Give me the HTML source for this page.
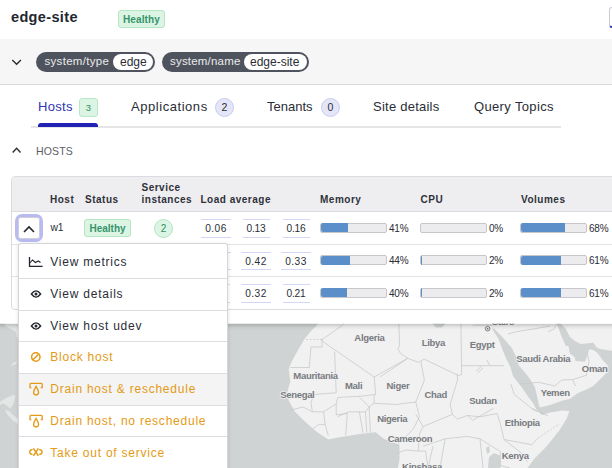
<!DOCTYPE html>
<html><head><meta charset="utf-8">
<style>
*{box-sizing:border-box;margin:0;padding:0}
html,body{width:612px;height:468px;overflow:hidden;background:#fff}
body{font-family:"Liberation Sans",sans-serif;color:#2a2d35;position:relative}
.abs{position:absolute;white-space:nowrap}
.t{position:absolute;white-space:nowrap;line-height:1}
</style></head><body>

<!-- header -->
<div class="t" style="left:11px;top:9.5px;font-size:14.5px;font-weight:700;letter-spacing:0.35px;color:#23262f">edge-site</div>
<div class="abs" style="left:118px;top:10px;width:47px;height:18px;background:#dcf4e4;border:1px solid #b4e6c4;border-radius:3px"></div>
<div class="t" style="left:123px;top:15px;font-size:10px;font-weight:700;letter-spacing:0.1px;color:#36946a">Healthy</div>
<div class="abs" style="left:609px;top:7px;width:12px;height:21px;border:1px solid #c9cad3;border-bottom:2px solid #2a2fbf;border-radius:3px"></div>

<!-- grey band -->
<div class="abs" style="left:0;top:39px;width:612px;height:46px;background:#f6f6f6;border-bottom:1px solid #dadadd"></div>
<svg class="abs" style="left:10px;top:57px" width="14" height="10" viewBox="0 0 14 10"><path d="M2.3 2.9 L6.6 7.2 L10.9 2.9" fill="none" stroke="#2a2d35" stroke-width="1.4"/></svg>

<div class="abs" style="left:36px;top:51.5px;width:119px;height:20px;background:#4f535d;border-radius:10px"></div>
<div class="abs" style="left:113px;top:53.8px;width:39.6px;height:16.2px;background:#fff;border-radius:8px"></div>
<div class="t" style="left:44.5px;top:55.9px;font-size:11.5px;letter-spacing:0.3px;color:#ebecee">system/type</div>
<div class="t" style="left:120px;top:56px;font-size:12px;color:#2a2d35">edge</div>

<div class="abs" style="left:162px;top:51.5px;width:147px;height:20px;background:#4f535d;border-radius:10px"></div>
<div class="abs" style="left:243.5px;top:53.8px;width:63.5px;height:16.2px;background:#fff;border-radius:8px"></div>
<div class="t" style="left:170px;top:55.9px;font-size:11.5px;letter-spacing:0.2px;color:#ebecee">system/name</div>
<div class="t" style="left:250px;top:56px;font-size:12px;color:#2a2d35">edge-site</div>

<!-- tabs -->
<div class="abs" style="left:31px;top:126px;width:530px;height:2px;background:#e6e6e8"></div>
<div class="abs" style="left:37.5px;top:123.2px;width:60.2px;height:3.8px;background:#1f22b3;border-radius:3px 3px 0 0"></div>
<div class="t" style="left:38px;top:100px;font-size:13px;letter-spacing:0.3px;color:#3033b3">Hosts</div>
<div class="abs" style="left:79px;top:98px;width:19px;height:19px;background:#dcf4e4;border:1px solid #b9e8c8;border-radius:3px;font-size:9.5px;color:#2f8f5e;text-align:center;line-height:17.5px">3</div>
<div class="t" style="left:131px;top:100px;font-size:13px;letter-spacing:0.55px;color:#2a2d35">Applications</div>
<div class="abs" style="left:215px;top:98px;width:19px;height:19px;background:#e4e6f8;border:1px solid #c8ccf0;border-radius:50%;font-size:10.5px;color:#2a2d35;text-align:center;line-height:17.5px">2</div>
<div class="t" style="left:267px;top:100px;font-size:13px;color:#2a2d35">Tenants</div>
<div class="abs" style="left:321px;top:98px;width:19px;height:19px;background:#e4e6f8;border:1px solid #c8ccf0;border-radius:50%;font-size:10.5px;color:#2a2d35;text-align:center;line-height:17.5px">0</div>
<div class="t" style="left:373px;top:100px;font-size:13px;letter-spacing:0.24px;color:#2a2d35">Site details</div>
<div class="t" style="left:474px;top:100px;font-size:13px;letter-spacing:0.35px;color:#2a2d35">Query Topics</div>

<!-- hosts section -->
<svg class="abs" style="left:10px;top:144px" width="14" height="12" viewBox="0 0 14 12"><path d="M2.7 8.5 L6.6 4.3 L10.5 8.5" fill="none" stroke="#2a2d35" stroke-width="1.4"/></svg>
<div class="t" style="left:36px;top:146px;font-size:10.5px;letter-spacing:0.15px;color:#5a5e66">HOSTS</div>

<!-- map -->
<svg class="abs" style="left:0;top:323px" width="612" height="145" viewBox="0 323 612 145">
<rect x="0" y="323" width="612" height="145" fill="#f0f1f0"/>
<g fill="#d0d3d3" stroke="none">
<!-- Atlantic + Gulf of Guinea -->
<path d="M0 323 H319 L311 331 L304.5 339 L298 350 L292 361 L288.7 369 L290.3 381.7 L287.1 392.8 L288.7 400.7 L295 411.8 L304.5 421.3 L317.2 432.3 L328.3 439.6 L340.9 437 L359.9 433.9 L375.7 432.3 L383.7 438.7 L391.6 441.8 L399.5 445 L399.5 459.2 L397.9 468 H0 Z"/>
<!-- Red Sea, Gulf of Aden, Arabian Sea, Persian Gulf -->
<path d="M492 328.8 L498.5 339 L502.7 350.3 L506.5 359.2 L510.4 366.9 L513 375.9 L516.8 381 L521.9 387.4 L527 395.1 L533 403.3 L536.6 409.7 L542 415.1 L550 412.5 L562.3 410.6 L569.5 411.1 L567 418 L559.1 430.8 L546.5 446.6 L533.8 459.2 L527.5 468 H612 V350.7 L602.7 349.4 L597.2 348 L593.1 342.5 L589 343.2 L580.8 343.9 L575.4 341.2 L569.9 337 L565.8 328.8 L560 323 H556 L558.3 327.5 L560.3 333 L563 339.8 L565.8 346 L568.5 346 L569.9 353.5 L574.7 356.9 L575.4 361 L584.9 361.7 L587.7 354.8 L589 349.4 L591.8 349.4 L594.5 350.7 L597.2 352.8 L600 356.2 L602.7 360.3 L605.5 363 L608.2 365.8 L608.2 371.2 L602.7 376.7 L597.2 382.2 L593.1 386 L587 389.3 L578 393 L569.7 399 L562.8 400.5 L550 405 L539.8 407.6 L538.5 403 L537 396 L535 387.4 L529.6 378.5 L524.5 372 L518.7 365.6 L516.2 356.7 L511.7 347.7 L508.8 344.6 L501.4 336 L494 328.5 Z"/>
<!-- Mediterranean bits -->
<path d="M432 323 H446 L442 327.5 L436 327.5 Z"/>
<!-- lakes -->
<path d="M489 457 L494 453 L500 455.5 L500.5 468 H488 Z"/>
<path d="M486 448 L489 446 L490 452 L487 454 Z"/>
</g>
<!-- left-edge land bits -->
<g fill="#e4e5e5">
<path d="M4 323 H18 V339 L16.5 336 L15.5 331.5 L12 329.5 L9 328 L6 326.5 Z"/>
<path d="M10.6 366 L14 362.3 L17.6 361 L15.5 364.6 Z"/>
<path d="M0 402 L6 398 L14 394.5 L15.3 396.5 L13 405 L10 408.5 L6 405 L3 403.5 L0 405 Z"/>
<path d="M4.7 410 L9 411 L13 415 L18.4 419 V424 L14 421.5 L8 415.5 Z"/>
</g>
<!-- borders -->
<g fill="none" stroke="#c6c7c9" stroke-width="0.75">
<path d="M306 339.6 H322" stroke-dasharray="2 1.5"/>
<path d="M322 339.6 L323.5 342 M310.9 347 H322 V339.6 M310.9 347 L309.3 367.5 H290.3"/>
<path d="M322 339.6 L341 326.3 L344 323"/>
<path d="M323.5 342 L374.2 377 L407.8 358.3"/>
<path d="M398.8 323.5 L399.6 345.2 L398 349 L400.4 353.4 L407.8 358.3 L418.4 362.4 L424.1 359.1 L458.4 375.5 L461.7 374.6 L460.9 323.5"/>
<path d="M461.7 365.7 H503.9 M486.6 359.8 L490 365.7"/>
<path d="M334.6 351.6 L336.2 392.8 L314 394.4 L310.9 402.9 L312.4 411.8"/>
<path d="M290.3 410.2 L303 407 L312.4 411.8 L323.5 411.8 L336.2 403.9 L337.8 397.5 L363 396 L375.7 394.4 L374.2 377"/>
<path d="M323.5 411.8 L325.1 424.4 L318.8 424.4 L312.4 429.2 M325.1 424.4 L328.3 435.5"/>
<path d="M336.2 414.9 L347.3 413.4 L345.7 435.5 M336.2 403.9 L336.2 414.9"/>
<path d="M359.4 397.2 L369.2 407 L365.5 411.9 L348.4 411.9 L337.4 416.8 M365.5 411.9 L366.8 432.7 M359.4 411.9 L363 432.7 M369.2 407 L370.4 432.7"/>
<path d="M374.1 394.7 L374.1 403.3 L396.2 404.5 L415.8 402 L419.5 416.8 L413.3 429 L403.5 438.8 L396 446"/>
<path d="M369.2 407 L374.1 403.3"/>
<path d="M407.8 358.3 L380 377"/>
<path d="M420.8 361.6 L424.4 380 L415.8 402"/>
<path d="M415.8 414.3 L423.1 426.6 L419.5 433.9 L418.2 451.1 L406 449.9 L396.2 453.5 M418.2 451.1 L425.6 451.1 L428 468"/>
<path d="M423.1 426.6 L452.5 414.3 L457.5 419.2 L467.3 415.5 L480 416.8 L497 413.5"/>
<path d="M457.2 373.7 L457.5 380 L450.1 404.5 L452.5 414.3"/>
<path d="M423.1 446.2 L445.2 438.8 L467.3 436.4 L480 438.8 L500.4 451.6"/>
<path d="M445.2 438.8 L440 468 M480 438.8 L483 468 M433 446.2 L428 468"/>
<path d="M472.7 420.4 L493.5 408.3 M467.3 415.5 L472.7 420.4"/>
<path d="M497 413.5 L500.4 424 L504 439.5 L531.6 444.7 L538.5 437.8"/>
<path d="M538.5 437.8 L559.3 424" stroke-dasharray="2 1.5"/>
<path d="M510.8 384 L514.3 394.5 L531.6 408.3 L536.8 411.8 M531.6 408.3 L548 416"/>
<path d="M500.4 451.6 L500.4 465.5 L510 468 M504 439.5 L520 452 L527.5 462"/>
<path d="M519.5 384 L538.5 382.3 L554.8 386 L561.7 380.1 L572.6 379.5 L586.3 375.3 L589 361.7 L587.7 354.8 M572.6 379.5 L575.4 386"/>
<path d="M548 331.6 L553.5 329.5 L556.2 324.7"/>
<path d="M472.7 325.2 L493.5 325 M508 334 L514.3 332 L535 328.7 L550 326"/>
<path d="M476 371 L482 366 M477.5 373 L483 368"/>
</g>
<!-- cairo marker -->
<circle cx="487.6" cy="328.7" r="2.3" fill="none" stroke="#6f7277" stroke-width="0.9"/>
<circle cx="487.6" cy="328.7" r="0.9" fill="#6f7277"/>
<g font-family="Liberation Sans" font-size="9.5" font-weight="700" fill="#787b80" text-anchor="middle" stroke="#f0f0f0" stroke-width="1.5" paint-order="stroke" style="letter-spacing:-0.3px">
<text x="369.4" y="341.0">Algeria</text>
<text x="315.6" y="379.0">Mauritania</text>
<text x="353.6" y="388.8">Mali</text>
<text x="397.9" y="388.8">Niger</text>
<text x="297.3" y="398.3">Senegal</text>
<text x="392.2" y="422.0">Nigeria</text>
<text x="410" y="441.7">Cameroon</text>
<text x="422" y="469.5">Kinshasa</text>
<text x="433.4" y="345.5">Libya</text>
<text x="482.1" y="348.3">Egypt</text>
<text x="543.3" y="362.2">Saudi Arabia</text>
<text x="594.7" y="371.5">Oman</text>
<text x="435.7" y="397.5">Chad</text>
<text x="483.1" y="404.4">Sudan</text>
<text x="555.2" y="395.7">Yemen</text>
<text x="522.3" y="425.9">Ethiopia</text>
<text x="515.3" y="459.1">Kenya</text>
<text x="503" y="324.5">Cairo</text>
</g>
</svg>
<div class="abs" style="left:0;top:323px;width:612px;height:1px;background:rgba(255,255,255,0.55)"></div>
<div class="abs" style="left:0;top:324px;width:612px;height:6px;background:linear-gradient(rgba(0,0,0,0.17),rgba(0,0,0,0.04) 60%,rgba(0,0,0,0))"></div>
<!-- table -->
<div class="abs" style="left:11px;top:176px;width:640px;height:134px;background:#fff;border:1px solid #dcdce0;border-radius:4px"></div>
<div class="abs" style="left:12px;top:177px;width:620px;height:35px;background:#eeeef1;border-bottom:1px solid #dcdce0;border-radius:3px 0 0 0"></div>
<div class="abs" style="left:12px;top:243.6px;width:620px;height:1px;background:#e2e2e5"></div>
<div class="abs" style="left:12px;top:276px;width:620px;height:1px;background:#e2e2e5"></div>
<div class="t" style="left:50px;top:194.5px;font-size:10px;font-weight:700;letter-spacing:0.5px;color:#2e3139;">Host</div>
<div class="t" style="left:85px;top:194.5px;font-size:10px;font-weight:700;letter-spacing:0.5px;color:#2e3139;">Status</div>
<div class="t" style="left:141.5px;top:182.9px;font-size:10px;font-weight:700;letter-spacing:0.5px;color:#2e3139;">Service</div>
<div class="t" style="left:141.5px;top:194.5px;font-size:10px;font-weight:700;letter-spacing:0.5px;color:#2e3139;">instances</div>
<div class="t" style="left:200.5px;top:194.5px;font-size:10px;font-weight:700;letter-spacing:0.5px;color:#2e3139;">Load average</div>
<div class="t" style="left:320px;top:194.5px;font-size:10px;font-weight:700;letter-spacing:0.5px;color:#2e3139;">Memory</div>
<div class="t" style="left:420.5px;top:194.5px;font-size:10px;font-weight:700;letter-spacing:0.5px;color:#2e3139;">CPU</div>
<div class="t" style="left:521px;top:194.5px;font-size:10px;font-weight:700;letter-spacing:0.5px;color:#2e3139;">Volumes</div>
<div class="t" style="left:50.5px;top:223.0px;font-size:10.3px;font-weight:400;letter-spacing:-0.1px;color:#2a2d35;">w1</div>
<div class="abs" style="left:84px;top:219.3px;width:47px;height:17.8px;background:#dcf4e4;border:1px solid #b4e6c4;border-radius:3px"></div>
<div class="t" style="left:89.5px;top:224.1px;font-size:10px;font-weight:700;letter-spacing:0px;color:#36946a;">Healthy</div>
<div class="abs" style="left:154px;top:219.1px;width:19px;height:19px;background:#dcf4e4;border:1px solid #b4e6c4;border-radius:50%;font-size:10px;color:#2f8f5e;text-align:center;line-height:17px">2</div>
<div class="abs" style="left:201.0px;top:219.0px;width:30px;height:18.7px;border-top:1px solid #d3d6f5;border-bottom:1.5px solid #d3d6f5;font-size:10.2px;letter-spacing:0.4px;text-align:center;line-height:17.4px;color:#2a2d35">0.06</div>
<div class="abs" style="left:242.5px;top:219.0px;width:27px;height:18.7px;border-top:1px solid #d3d6f5;border-bottom:1.5px solid #d3d6f5;font-size:10.2px;letter-spacing:-0.25px;text-align:center;line-height:17.4px;color:#2a2d35">0.13</div>
<div class="abs" style="left:282.5px;top:219.0px;width:27px;height:18.7px;border-top:1px solid #d3d6f5;border-bottom:1.5px solid #d3d6f5;font-size:10.2px;letter-spacing:-0.25px;text-align:center;line-height:17.4px;color:#2a2d35">0.16</div>
<div class="abs" style="left:320px;top:222.9px;width:67px;height:10px;background:#ececef;border:1px solid #c6c6cb;border-radius:2px;overflow:hidden"></div>
<div class="abs" style="left:320.5px;top:223.4px;width:27px;height:9px;background:#5b8fca;border-radius:2px 0 0 2px"></div>
<div class="t" style="left:389px;top:223.8px;font-size:10px;font-weight:400;letter-spacing:-0.2px;color:#2a2d35;">41%</div>
<div class="abs" style="left:420px;top:222.9px;width:67px;height:10px;background:#ececef;border:1px solid #c6c6cb;border-radius:2px;overflow:hidden"></div>
<div class="t" style="left:489px;top:223.8px;font-size:10px;font-weight:400;letter-spacing:-0.2px;color:#2a2d35;">0%</div>
<div class="abs" style="left:520px;top:222.9px;width:67px;height:10px;background:#ececef;border:1px solid #c6c6cb;border-radius:2px;overflow:hidden"></div>
<div class="abs" style="left:520.5px;top:223.4px;width:44px;height:9px;background:#5b8fca;border-radius:2px 0 0 2px"></div>
<div class="t" style="left:589px;top:223.8px;font-size:10px;font-weight:400;letter-spacing:-0.2px;color:#2a2d35;">68%</div>
<div class="t" style="left:50.5px;top:255.5px;font-size:10.3px;font-weight:400;letter-spacing:-0.1px;color:#2a2d35;">w2</div>
<div class="abs" style="left:84px;top:251.8px;width:47px;height:17.8px;background:#dcf4e4;border:1px solid #b4e6c4;border-radius:3px"></div>
<div class="t" style="left:89.5px;top:256.6px;font-size:10px;font-weight:700;letter-spacing:0px;color:#36946a;">Healthy</div>
<div class="abs" style="left:154px;top:251.6px;width:19px;height:19px;background:#dcf4e4;border:1px solid #b4e6c4;border-radius:50%;font-size:10px;color:#2f8f5e;text-align:center;line-height:17px">2</div>
<div class="abs" style="left:201.0px;top:251.5px;width:30px;height:18.7px;border-top:1px solid #d3d6f5;border-bottom:1.5px solid #d3d6f5;font-size:10.2px;letter-spacing:0.4px;text-align:center;line-height:17.4px;color:#2a2d35">0.35</div>
<div class="abs" style="left:241.0px;top:251.5px;width:30px;height:18.7px;border-top:1px solid #d3d6f5;border-bottom:1.5px solid #d3d6f5;font-size:10.2px;letter-spacing:0.4px;text-align:center;line-height:17.4px;color:#2a2d35">0.42</div>
<div class="abs" style="left:281.0px;top:251.5px;width:30px;height:18.7px;border-top:1px solid #d3d6f5;border-bottom:1.5px solid #d3d6f5;font-size:10.2px;letter-spacing:0.4px;text-align:center;line-height:17.4px;color:#2a2d35">0.33</div>
<div class="abs" style="left:320px;top:255.4px;width:67px;height:10px;background:#ececef;border:1px solid #c6c6cb;border-radius:2px;overflow:hidden"></div>
<div class="abs" style="left:320.5px;top:255.9px;width:29px;height:9px;background:#5b8fca;border-radius:2px 0 0 2px"></div>
<div class="t" style="left:389px;top:256.3px;font-size:10px;font-weight:400;letter-spacing:-0.2px;color:#2a2d35;">44%</div>
<div class="abs" style="left:420px;top:255.4px;width:67px;height:10px;background:#ececef;border:1px solid #c6c6cb;border-radius:2px;overflow:hidden"></div>
<div class="abs" style="left:420.5px;top:255.9px;width:1.5px;height:9px;background:#5b8fca;border-radius:2px 0 0 2px"></div>
<div class="t" style="left:489px;top:256.3px;font-size:10px;font-weight:400;letter-spacing:-0.2px;color:#2a2d35;">2%</div>
<div class="abs" style="left:520px;top:255.4px;width:67px;height:10px;background:#ececef;border:1px solid #c6c6cb;border-radius:2px;overflow:hidden"></div>
<div class="abs" style="left:520.5px;top:255.9px;width:40px;height:9px;background:#5b8fca;border-radius:2px 0 0 2px"></div>
<div class="t" style="left:589px;top:256.3px;font-size:10px;font-weight:400;letter-spacing:-0.2px;color:#2a2d35;">61%</div>
<div class="t" style="left:50.5px;top:288.0px;font-size:10.3px;font-weight:400;letter-spacing:-0.1px;color:#2a2d35;">w3</div>
<div class="abs" style="left:84px;top:284.3px;width:47px;height:17.8px;background:#dcf4e4;border:1px solid #b4e6c4;border-radius:3px"></div>
<div class="t" style="left:89.5px;top:289.1px;font-size:10px;font-weight:700;letter-spacing:0px;color:#36946a;">Healthy</div>
<div class="abs" style="left:154px;top:284.1px;width:19px;height:19px;background:#dcf4e4;border:1px solid #b4e6c4;border-radius:50%;font-size:10px;color:#2f8f5e;text-align:center;line-height:17px">2</div>
<div class="abs" style="left:202.5px;top:284.0px;width:27px;height:18.7px;border-top:1px solid #d3d6f5;border-bottom:1.5px solid #d3d6f5;font-size:10.2px;letter-spacing:-0.25px;text-align:center;line-height:17.4px;color:#2a2d35">0.41</div>
<div class="abs" style="left:241.0px;top:284.0px;width:30px;height:18.7px;border-top:1px solid #d3d6f5;border-bottom:1.5px solid #d3d6f5;font-size:10.2px;letter-spacing:0.4px;text-align:center;line-height:17.4px;color:#2a2d35">0.32</div>
<div class="abs" style="left:282.5px;top:284.0px;width:27px;height:18.7px;border-top:1px solid #d3d6f5;border-bottom:1.5px solid #d3d6f5;font-size:10.2px;letter-spacing:-0.25px;text-align:center;line-height:17.4px;color:#2a2d35">0.21</div>
<div class="abs" style="left:320px;top:287.9px;width:67px;height:10px;background:#ececef;border:1px solid #c6c6cb;border-radius:2px;overflow:hidden"></div>
<div class="abs" style="left:320.5px;top:288.4px;width:26px;height:9px;background:#5b8fca;border-radius:2px 0 0 2px"></div>
<div class="t" style="left:389px;top:288.8px;font-size:10px;font-weight:400;letter-spacing:-0.2px;color:#2a2d35;">40%</div>
<div class="abs" style="left:420px;top:287.9px;width:67px;height:10px;background:#ececef;border:1px solid #c6c6cb;border-radius:2px;overflow:hidden"></div>
<div class="abs" style="left:420.5px;top:288.4px;width:1.5px;height:9px;background:#5b8fca;border-radius:2px 0 0 2px"></div>
<div class="t" style="left:489px;top:288.8px;font-size:10px;font-weight:400;letter-spacing:-0.2px;color:#2a2d35;">2%</div>
<div class="abs" style="left:520px;top:287.9px;width:67px;height:10px;background:#ececef;border:1px solid #c6c6cb;border-radius:2px;overflow:hidden"></div>
<div class="abs" style="left:520.5px;top:288.4px;width:40px;height:9px;background:#5b8fca;border-radius:2px 0 0 2px"></div>
<div class="t" style="left:589px;top:288.8px;font-size:10px;font-weight:400;letter-spacing:-0.2px;color:#2a2d35;">61%</div>
<div class="abs" style="left:15px;top:214px;width:28px;height:28px;border:3.5px solid #b9baf2;border-radius:7px;background:#fff"></div>
<div class="abs" style="left:18.3px;top:217.3px;width:21.4px;height:21.4px;border:1px solid #cfcfd6;border-radius:3px;background:#fff"></div>
<svg class="abs" style="left:22px;top:222.6px" width="14" height="12" viewBox="0 0 14 12"><path d="M2 9 L7 4 L12 9" fill="none" stroke="#23262f" stroke-width="1.6"/></svg>
<!-- menu -->
<div class="abs" style="left:18px;top:243px;width:210px;height:240px;background:#fff;border:1px solid #d6d6da;border-radius:3px;box-shadow:0 1px 4px rgba(0,0,0,0.12)"></div>
<div class="abs" style="left:19px;top:373.5px;width:208px;height:31.5px;background:#f4f4f5"></div>
<div class="abs" style="left:19px;top:278px;width:208px;height:1px;background:#dedee2"></div>
<div class="abs" style="left:19px;top:310px;width:208px;height:1px;background:#dedee2"></div>
<div class="abs" style="left:19px;top:341px;width:208px;height:1px;background:#dedee2"></div>
<div class="abs" style="left:19px;top:373px;width:208px;height:1px;background:#dedee2"></div>
<div class="abs" style="left:19px;top:404.8px;width:208px;height:1px;background:#dedee2"></div>
<div class="abs" style="left:19px;top:436.3px;width:208px;height:1px;background:#dedee2"></div>
<div class="t" style="left:50.3px;top:256.3px;font-size:12px;font-weight:400;letter-spacing:0.77px;color:#2a2d35;">View metrics</div>
<div class="t" style="left:50.3px;top:288px;font-size:12px;font-weight:400;letter-spacing:0.77px;color:#2a2d35;">View details</div>
<div class="t" style="left:50.3px;top:319.7px;font-size:12px;font-weight:400;letter-spacing:0.77px;color:#2a2d35;">View host udev</div>
<div class="t" style="left:50.3px;top:351.4px;font-size:12px;font-weight:400;letter-spacing:0.77px;color:#e49a14;">Block host</div>
<div class="t" style="left:50.3px;top:383.1px;font-size:12px;font-weight:400;letter-spacing:0.77px;color:#e49a14;">Drain host &amp; reschedule</div>
<div class="t" style="left:50.3px;top:414.8px;font-size:12px;font-weight:400;letter-spacing:0.77px;color:#e49a14;">Drain host, no reschedule</div>
<div class="t" style="left:50.3px;top:446.5px;font-size:12px;font-weight:400;letter-spacing:0.77px;color:#e49a14;">Take out of service</div>
<svg class="abs" style="left:27px;top:255px" width="18" height="14" viewBox="0 0 18 14"><path d="M2.5 2 V11.3 H15.6" fill="none" stroke="#23262f" stroke-width="1.3"/><path d="M2.8 8 L5.5 5 L8.5 7.5 L11.3 6 L13.5 7.5" fill="none" stroke="#23262f" stroke-width="1.1"/></svg>
<svg class="abs" style="left:29px;top:287px" width="14" height="14" viewBox="0 0 14 14"><path d="M2.4 7 Q7 0.8 11.6 7 Q7 13.2 2.4 7 Z" fill="none" stroke="#23262f" stroke-width="1.4"/><circle cx="7" cy="7" r="1.5" fill="#23262f"/></svg>
<svg class="abs" style="left:29px;top:318.7px" width="14" height="14" viewBox="0 0 14 14"><path d="M2.4 7 Q7 0.8 11.6 7 Q7 13.2 2.4 7 Z" fill="none" stroke="#23262f" stroke-width="1.4"/><circle cx="7" cy="7" r="1.5" fill="#23262f"/></svg>
<svg class="abs" style="left:29px;top:350px" width="14" height="14" viewBox="0 0 14 14"><circle cx="6.8" cy="7" r="4.2" fill="none" stroke="#e49a14" stroke-width="1.5"/><path d="M4 9.8 L9.6 4.2" stroke="#e49a14" stroke-width="1.5"/></svg>
<svg class="abs" style="left:28px;top:381px" width="16" height="16" viewBox="0 0 16 16"><path d="M3.3 6.6 H2 V3.3 Q2 2.3 3 2.3 H13.2 Q14.2 2.3 14.2 3.3 V6.6 H12.7" fill="none" stroke="#e49a14" stroke-width="1.3"/><path d="M8.1 5.3 Q10.6 9.3 10.6 11.6 Q10.6 14 8.1 14 Q5.6 14 5.6 11.6 Q5.6 9.3 8.1 5.3 Z" fill="none" stroke="#e49a14" stroke-width="1.3"/></svg>
<svg class="abs" style="left:28px;top:412.7px" width="16" height="16" viewBox="0 0 16 16"><path d="M3.3 6.6 H2 V3.3 Q2 2.3 3 2.3 H13.2 Q14.2 2.3 14.2 3.3 V6.6 H12.7" fill="none" stroke="#e49a14" stroke-width="1.3"/><path d="M8.1 5.3 Q10.6 9.3 10.6 11.6 Q10.6 14 8.1 14 Q5.6 14 5.6 11.6 Q5.6 9.3 8.1 5.3 Z" fill="none" stroke="#e49a14" stroke-width="1.3"/></svg>
<svg class="abs" style="left:28px;top:445px" width="16" height="14" viewBox="0 0 16 14"><path d="M4.6 4.9 A2.2 2.2 0 1 0 4.6 9.1" fill="none" stroke="#e49a14" stroke-width="1.5"/><path d="M11.2 4.9 A2.2 2.2 0 1 1 11.2 9.1" fill="none" stroke="#e49a14" stroke-width="1.5"/><path d="M5.4 3.4 L10.4 10.8 M10.4 3.4 L5.4 10.8" stroke="#e49a14" stroke-width="1.5"/></svg>
</body></html>
